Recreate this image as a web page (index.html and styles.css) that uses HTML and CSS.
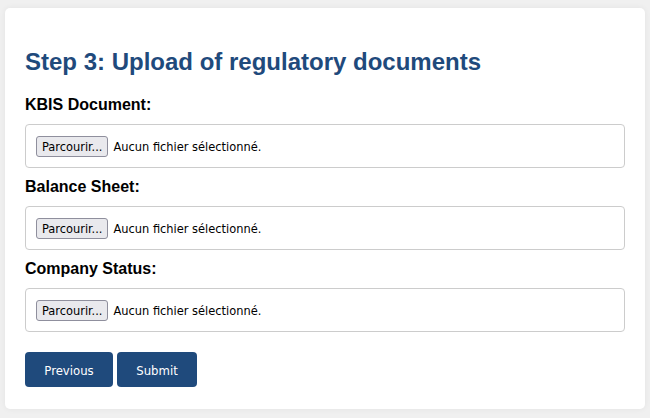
FILE: index.html
```html
<!DOCTYPE html>
<html lang="fr">
<head>
<meta charset="utf-8">
<title>Step 3</title>
<link rel="stylesheet" href="styles.css">
</head>
<body>
<div class="card">
  <h2 class="title">Step 3: Upload of regulatory documents</h2>
  <label class="field-label">KBIS Document:</label>
  <div class="file-box"><span class="file-btn">Parcourir...</span><span class="file-text">Aucun fichier sélectionné.</span></div>
  <label class="field-label">Balance Sheet:</label>
  <div class="file-box"><span class="file-btn">Parcourir...</span><span class="file-text">Aucun fichier sélectionné.</span></div>
  <label class="field-label">Company Status:</label>
  <div class="file-box"><span class="file-btn">Parcourir...</span><span class="file-text">Aucun fichier sélectionné.</span></div>
  <div class="actions">
    <button class="btn btn-prev">Previous</button>
    <button class="btn btn-submit">Submit</button>
  </div>
</div>
</body>
</html>
```
FILE: styles.css
```css
html, body {
  margin: 0;
  background: #f0f0f0;
}
body {
  padding: 8px 5px 9px 5px;
  font-family: "Liberation Sans", Arial, sans-serif;
}
.card {
  background: #fff;
  border-radius: 5px;
  padding: 20px 20px 22px 20px;
  box-shadow: 0 0 6px rgba(0,0,0,0.06);
}
.title {
  margin: 20px 0 20px 0;
  font-size: 24px;
  line-height: 28px;
  font-weight: bold;
  color: #1f4a7c;
}
.field-label {
  display: block;
  font-size: 16px;
  line-height: 18px;
  font-weight: bold;
  color: #000;
  margin-bottom: 10px;
}
.file-box {
  display: flex;
  align-items: center;
  height: 42px;
  padding: 1px 10px 0 10px;
  box-sizing: content-box;
  height: 41px;
  border: 1px solid #ccc;
  border-radius: 4px;
  margin-bottom: 10px;
  font-family: "DejaVu Sans Condensed", "DejaVu Sans", sans-serif;
  font-size: 12.7px;
  color: #000;
}
.file-btn {
  box-sizing: border-box;
  height: 21px;
  line-height: 19px;
  padding: 0 5px;
  border: 1px solid #8f8f9d;
  border-radius: 3px;
  background: #e9e9ed;
  margin-right: 5px;
}
.actions {
  display: flex;
  gap: 4px;
  margin-top: 20px;
}
.btn {
  height: 35px;
  border: none;
  border-radius: 4px;
  background: #1f4a7c;
  color: #fff;
  font-family: "DejaVu Sans Condensed", "DejaVu Sans", sans-serif;
  font-size: 13px;
  padding: 1px 0 0 0;
}
.btn-prev { width: 88px; }
.btn-submit { width: 80px; }
```
